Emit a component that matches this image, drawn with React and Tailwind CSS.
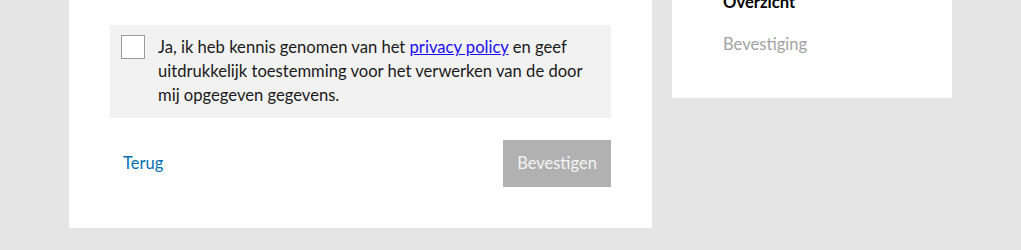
import React from 'react'

export default function App() {
    return (
        <div className="min-h-[250px] bg-[#e5e5e5] overflow-hidden" style={{ fontFamily: 'Lato, "Noto Sans", sans-serif' }}>
            <div className="mx-auto w-[883px] flex items-start gap-5 -mt-[40px]">
                <div className="w-[583px] bg-white px-[41px] pt-[65px] pb-[41px]">
                    <label className="flex items-start bg-[#f2f2f2] pl-[11px] pr-4 pt-[10px] pb-[11px]">
                        <span className="w-6 h-6 shrink-0 border border-[#9a9a9a] bg-white" />
                        <span className="ml-[13px] text-[16.6px] leading-[24px] text-[#1a1a1a]">
                            Ja, ik heb kennis genomen van het{' '}
                            <a href="#" className="text-[#1a0dee] underline">privacy policy</a>{' '}
                            en geef uitdrukkelijk toestemming voor het verwerken van de door mij opgegeven gegevens.
                        </span>
                    </label>
                    <div className="flex items-center justify-between mt-[22px]">
                        <a href="#" className="ml-[13px] text-[16.5px] text-[#0071b5]">Terug</a>
                        <button className="w-[108px] h-[47px] bg-[#b1b1b1] text-[#f4f4f4] text-[16.5px]">Bevestigen</button>
                    </div>
                </div>
                <div className="w-[280px] bg-white pl-[51px] pt-[30px] pb-[42px]">
                    <ul className="text-[16.6px] leading-[24px]">
                        <li className="font-bold text-black">Overzicht</li>
                        <li className="mt-[18px] text-[#a3a3a3]">Bevestiging</li>
                    </ul>
                </div>
            </div>
        </div>
    )
}
